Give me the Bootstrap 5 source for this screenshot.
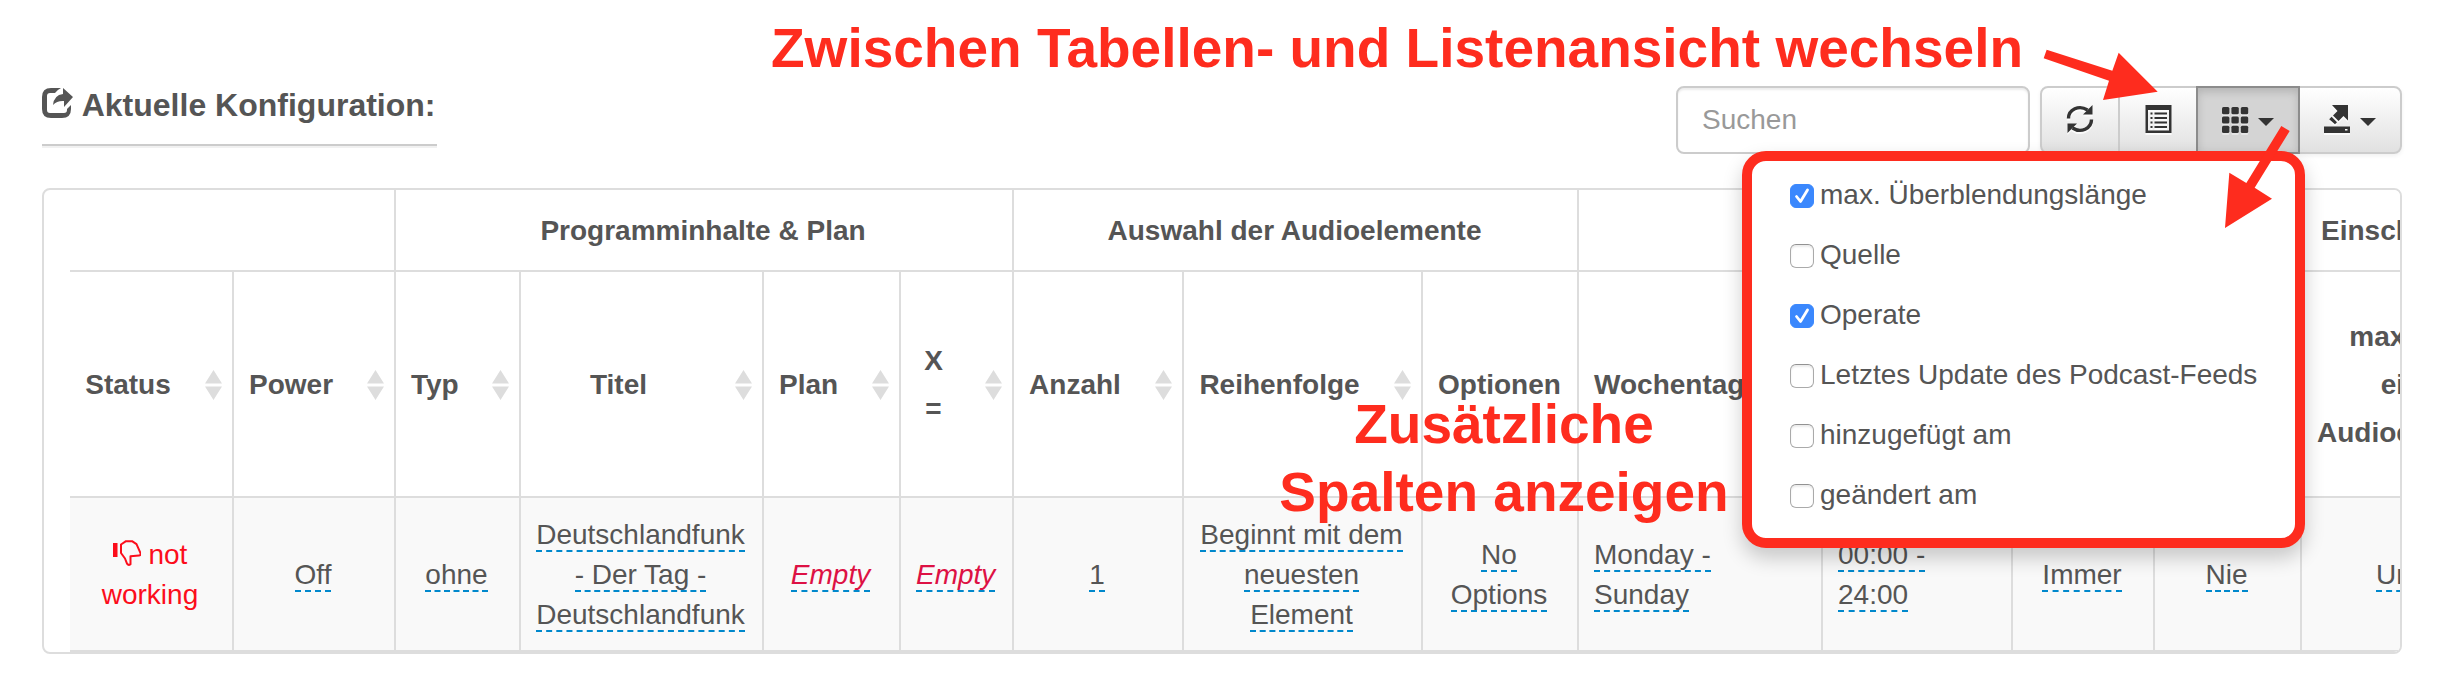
<!DOCTYPE html>
<html lang="de">
<head>
<meta charset="utf-8">
<title>Aktuelle Konfiguration</title>
<link rel="stylesheet" href="https://cdn.jsdelivr.net/npm/bootstrap@5.3.0/dist/css/bootstrap.min.css">
<style>
  body { font: 28px/40px "Liberation Sans", Arial, sans-serif; color: #555; background: #fff; overflow: hidden; }
  .page { position: relative; height: 678px; padding: 86px 42px 0; overflow: hidden; }
  .toolbar { height: 68px; margin-bottom: 34px; }
  .page-title { width: 395px; font-size: 32px; line-height: 40px; font-weight: 700; color: #555; margin: -1px 0 0; padding-bottom: 19px; border-bottom: 2px solid #ccc; box-shadow: 0 2px 0 #f1f1f1; white-space: pre; }
  .page-title svg { width: 32px; height: 32px; vertical-align: -3px; }

  .form-control.search { width: 354px; height: 68px; padding: 0 24px; margin-right: 10px; font-size: 28px; border: 2px solid #ccc; border-radius: 8px; box-shadow: inset 0 2px 2px rgba(0,0,0,.075); }
  .search::placeholder { color: #999; opacity: 1; }
  .tools { height: 68px; border-radius: 8px; box-shadow: 0 2px 4px rgba(0,0,0,.06); }
  .tools .btn { display: flex; align-items: center; justify-content: center; gap: 8px; width: 80px; height: 68px; padding: 0; border: 2px solid #ccc; border-radius: 0; color: #333; background: linear-gradient(#fff, #e1e1e1); }
  .tools > * + * { margin-left: -2px !important; }
  .tools > .btn:first-child { border-radius: 8px 0 0 8px; }
  .tools .btn.last { border-radius: 0 8px 8px 0; }
  .tools .btn.wide { width: 104px; }
  .tools .btn.pressed { background: #d4d4d4; border-color: #8c8c8c; box-shadow: inset 0 4px 8px rgba(0,0,0,.15); z-index: 2; }
  .tools svg { width: 28px; height: 28px; margin-top: -2px; filter: drop-shadow(0 2px 0 rgba(255,255,255,.75)); flex: none; }
  .tools .pressed svg { margin-top: -1px; filter: drop-shadow(0 2px 0 rgba(255,255,255,.4)); }
  .tri { border: 8px solid transparent; border-top-color: #333; border-bottom: 0; margin-top: 4px; }

  .dropdown-menu.columns { top: 65px; right: -5px; left: auto; width: 563px; height: 397px; margin: 0; padding: 3px 0 0; border: 10px solid #fe2c1e; border-radius: 24px; box-shadow: 0 10px 20px rgba(0,0,0,.2); font-size: 28px; color: #555; z-index: 5; }
  .columns label { height: 60px; padding: 2px 0 0 38px; gap: 6px; }
  .columns .form-check-input { width: 24px; height: 24px; margin: 2px 0 0; float: none; border: 1.5px solid #aaa; border-top-color: #929292; border-radius: 6px; box-shadow: inset 0 2px 2px rgba(0,0,0,.08); flex: none; }
  .columns .form-check-input:checked { background-color: #3b88fd; border-color: #3b88fd; background-size: 24px; box-shadow: none; background-image: url("data:image/svg+xml,%3csvg xmlns='http://www.w3.org/2000/svg' viewBox='0 0 24 24'%3e%3cpath d='M6.500 12.500l4 5L17.500 6' fill='none' stroke='%23fff' stroke-width='2.800' stroke-linecap='round' stroke-linejoin='round'/%3e%3c/svg%3e"); }

  .grid-frame { height: 466px; padding-left: 26px; border: 2px solid #ddd; border-radius: 8px; overflow: hidden; }
  .table.plan-grid { width: 2507px; margin: 0; table-layout: fixed; border-collapse: separate; border-spacing: 0; color: #555; }
  .table.plan-grid > :not(caption) > * > * { padding: 2px 17px 0 15px; border: 0 solid #ddd; border-bottom-width: 2px; vertical-align: middle; text-align: center; white-space: nowrap; color: #555; background: #fff; box-shadow: none; }
  .table.plan-grid > :not(caption) > * > * + * { border-left-width: 2px; }
  .table.plan-grid > thead > tr > th { line-height: 48px; }
  .table.plan-grid > tbody > tr > td { background: #f9f9f9; }
  .plan-grid .r-group { height: 82px; }
  .plan-grid .r-head { height: 226px; }
  .plan-grid .r-data { height: 154px; }
  .table.plan-grid > thead > tr > th.sortable { position: relative; padding-right: 61px; }
  .sortable::after { content: ""; position: absolute; right: 10px; top: 50%; width: 17px; height: 30px; margin-top: -14px; background: #ddd; clip-path: polygon(50% 0, 100% 45%, 0 45%, 50% 0, 0 55%, 100% 55%, 50% 100%, 0 55%, 50% 0); }
  .table.plan-grid > :not(caption) > * > .at-start { text-align: left; }
  .table.plan-grid > thead > tr > th.cut { border-left: 0; padding-left: 21px; text-align: left; }
  .table.plan-grid > tbody > tr > td.cut { padding-left: 74px; text-align: left; }
  .editable { border-bottom: 2px dashed #08c; }
  .unset { color: #d14; font-style: italic; }
  .table.plan-grid > tbody > tr > td.failed { color: #fc0d1b; }
  .failed svg { width: 28px; height: 28px; vertical-align: -4px; }

  .note { position: absolute; margin: 0; font-size: 55px; line-height: 68px; font-weight: 700; color: #fe2c1e; text-align: center; white-space: nowrap; z-index: 1; }
  .note-view { left: 771px; top: 14px; }
  .note-cols { left: 1277px; top: 390px; width: 454px; }
  .arrows { position: absolute; left: 2030px; top: 30px; width: 400px; height: 220px; z-index: 10; pointer-events: none; }
</style>
</head>
<body>
<div class="page">
  <header class="toolbar d-flex justify-content-between align-items-start">
    <h1 class="page-title"><svg viewBox="0 0 32 32"><path d="M19 1H9Q0 1 0 10v12q0 9 9 9h11q9 0 9-9v-4l-4 4v1q0 3-3 3H8q-3 0-3-3V9q0-3 3-3h5q2-3 6-5z" fill="#555"/><path d="M21 1l10 9-9 10v-6q-7-.5-11 4Q12 8 21 7z" fill="#555"/></svg> Aktuelle Konfiguration:</h1>
    <div class="d-flex">
      <input class="form-control search" type="text" placeholder="Suchen">
      <div class="btn-group tools">
        <button class="btn" type="button" aria-label="Aktualisieren"><svg viewBox="0 0 28 28"><g fill="none" stroke="#333" stroke-width="3.4"><path d="M2.500 13.500C2.500 4.500 13-.5 21.500 5"/><path d="M25.500 14.500C25.500 23.500 15 28.500 6.500 23"/></g><path d="M26.500 0v9.500H17zM1.500 28v-9.500H11z" fill="#333"/></svg></button>
        <button class="btn" type="button" aria-label="Listenansicht"><svg viewBox="0 0 28 28"><path d="M1.500 0h26v28h-26zM4 5v20.500h21V5z" fill="#333" fill-rule="evenodd"/><path d="M6.500 7.500h2v2h-2zM10.500 7.500H23v2H10.500zM6.500 12h2v2h-2zM10.500 12H23v2H10.500zM6.500 16.500h2v2h-2zM10.500 16.500H23v2H10.500zM6.500 21h2v2h-2zM10.500 21H23v2H10.500z" fill="#333"/></svg></button>
        <div class="btn-group">
          <button class="btn wide pressed" type="button" aria-label="Spalten"><svg viewBox="0 0 28 28"><g fill="#333"><rect x="0" y="1" width="7.400" height="7.200" rx="1.500"/><rect x="9.400" y="1" width="7.400" height="7.200" rx="1.500"/><rect x="18.800" y="1" width="7.400" height="7.200" rx="1.500"/><rect x="0" y="10.400" width="7.400" height="7.200" rx="1.500"/><rect x="9.400" y="10.400" width="7.400" height="7.200" rx="1.500"/><rect x="18.800" y="10.400" width="7.400" height="7.200" rx="1.500"/><rect x="0" y="19.800" width="7.400" height="7.200" rx="1.500"/><rect x="9.400" y="19.800" width="7.400" height="7.200" rx="1.500"/><rect x="18.800" y="19.800" width="7.400" height="7.200" rx="1.500"/></g></svg><span class="tri"></span></button>
          <div class="dropdown-menu columns show">
            <label class="d-flex align-items-center"><input class="form-check-input" type="checkbox" checked>max. Überblendungslänge</label>
            <label class="d-flex align-items-center"><input class="form-check-input" type="checkbox">Quelle</label>
            <label class="d-flex align-items-center"><input class="form-check-input" type="checkbox" checked>Operate</label>
            <label class="d-flex align-items-center"><input class="form-check-input" type="checkbox">Letztes Update des Podcast-Feeds</label>
            <label class="d-flex align-items-center"><input class="form-check-input" type="checkbox">hinzugefügt am</label>
            <label class="d-flex align-items-center"><input class="form-check-input" type="checkbox">geändert am</label>
          </div>
        </div>
        <button class="btn wide last" type="button" aria-label="Export"><svg viewBox="0 0 28 28"><path d="M8 0h16v15.500l-4.500-4.500-5 5-5.500-5.500 4.500-4.500zM7.600 11.800l5.400 5.400-2 2-5.800-5zM0 21.500h26V28H0zM21 24v1.500h2.500V24z" fill="#333" fill-rule="evenodd"/></svg><span class="tri"></span></button>
      </div>
    </div>
  </header>

  <div class="grid-frame">
    <table class="table plan-grid">
      <colgroup>
        <col style="width:162px"><col style="width:162px"><col style="width:125px"><col style="width:243px"><col style="width:137px"><col style="width:113px"><col style="width:170px"><col style="width:239px"><col style="width:156px"><col style="width:244px"><col style="width:190px"><col style="width:142px"><col style="width:147px"><col style="width:277px">
      </colgroup>
      <thead>
        <tr class="r-group">
          <th colspan="2"></th>
          <th colspan="4">Programminhalte &amp; Plan</th>
          <th colspan="3">Auswahl der Audioelemente</th>
          <th colspan="4"></th>
          <th class="cut">Einschränkungen</th>
        </tr>
        <tr class="r-head">
          <th class="sortable">Status</th>
          <th class="sortable">Power</th>
          <th class="sortable">Typ</th>
          <th class="sortable">Titel</th>
          <th class="sortable">Plan</th>
          <th class="sortable">X<br>=</th>
          <th class="sortable">Anzahl</th>
          <th class="sortable">Reihenfolge</th>
          <th>Optionen</th>
          <th class="sortable">Wochentage</th>
          <th></th>
          <th></th>
          <th></th>
          <th class="sortable">max. Alter<br>eines<br>Audioelemente</th>
        </tr>
      </thead>
      <tbody>
        <tr class="r-data">
          <td class="failed"><svg viewBox="0 0 28 28"><path d="M0 3h4.500v14H0z" fill="#fc0d1b"/><path d="M8 4.500L13 1.200h6l4.500 3 4 8.800q.5 2.500-1.500 2.500l-8.500.7v8q-2 1.500-3.500-.5l-2-5.200-4-5.500z" fill="none" stroke="#fc0d1b" stroke-width="2" stroke-linejoin="round"/></svg> not<br>working</td>
          <td><span class="editable">Off</span></td>
          <td><span class="editable">ohne</span></td>
          <td><span class="editable">Deutschlandfunk<br>- Der Tag -<br>Deutschlandfunk</span></td>
          <td><span class="editable unset">Empty</span></td>
          <td><span class="editable unset">Empty</span></td>
          <td><span class="editable">1</span></td>
          <td><span class="editable">Beginnt mit dem<br>neuesten<br>Element</span></td>
          <td><span class="editable">No<br>Options</span></td>
          <td class="at-start"><span class="editable">Monday -<br>Sunday</span></td>
          <td class="at-start"><span class="editable">00:00 -<br>24:00</span></td>
          <td><span class="editable">Immer</span></td>
          <td><span class="editable">Nie</span></td>
          <td class="cut"><span class="editable">Unlimited</span></td>
        </tr>
      </tbody>
    </table>
  </div>

  <p class="note note-view">Zwischen Tabellen- und Listenansicht wechseln</p>
  <p class="note note-cols">Zusätzliche<br>Spalten anzeigen</p>
  <svg class="arrows" viewBox="0 0 1200 660"><path d="M50 59L247 122 266 68 383 185 219 210 237 152 41 85zM754 288L779 303 674 473 726 506 585 594 598 428 649 459z" fill="#fe2c1e"/></svg>
</div>
<script src="https://cdn.jsdelivr.net/npm/bootstrap@5.3.0/dist/js/bootstrap.bundle.min.js"></script>
</body>
</html>
